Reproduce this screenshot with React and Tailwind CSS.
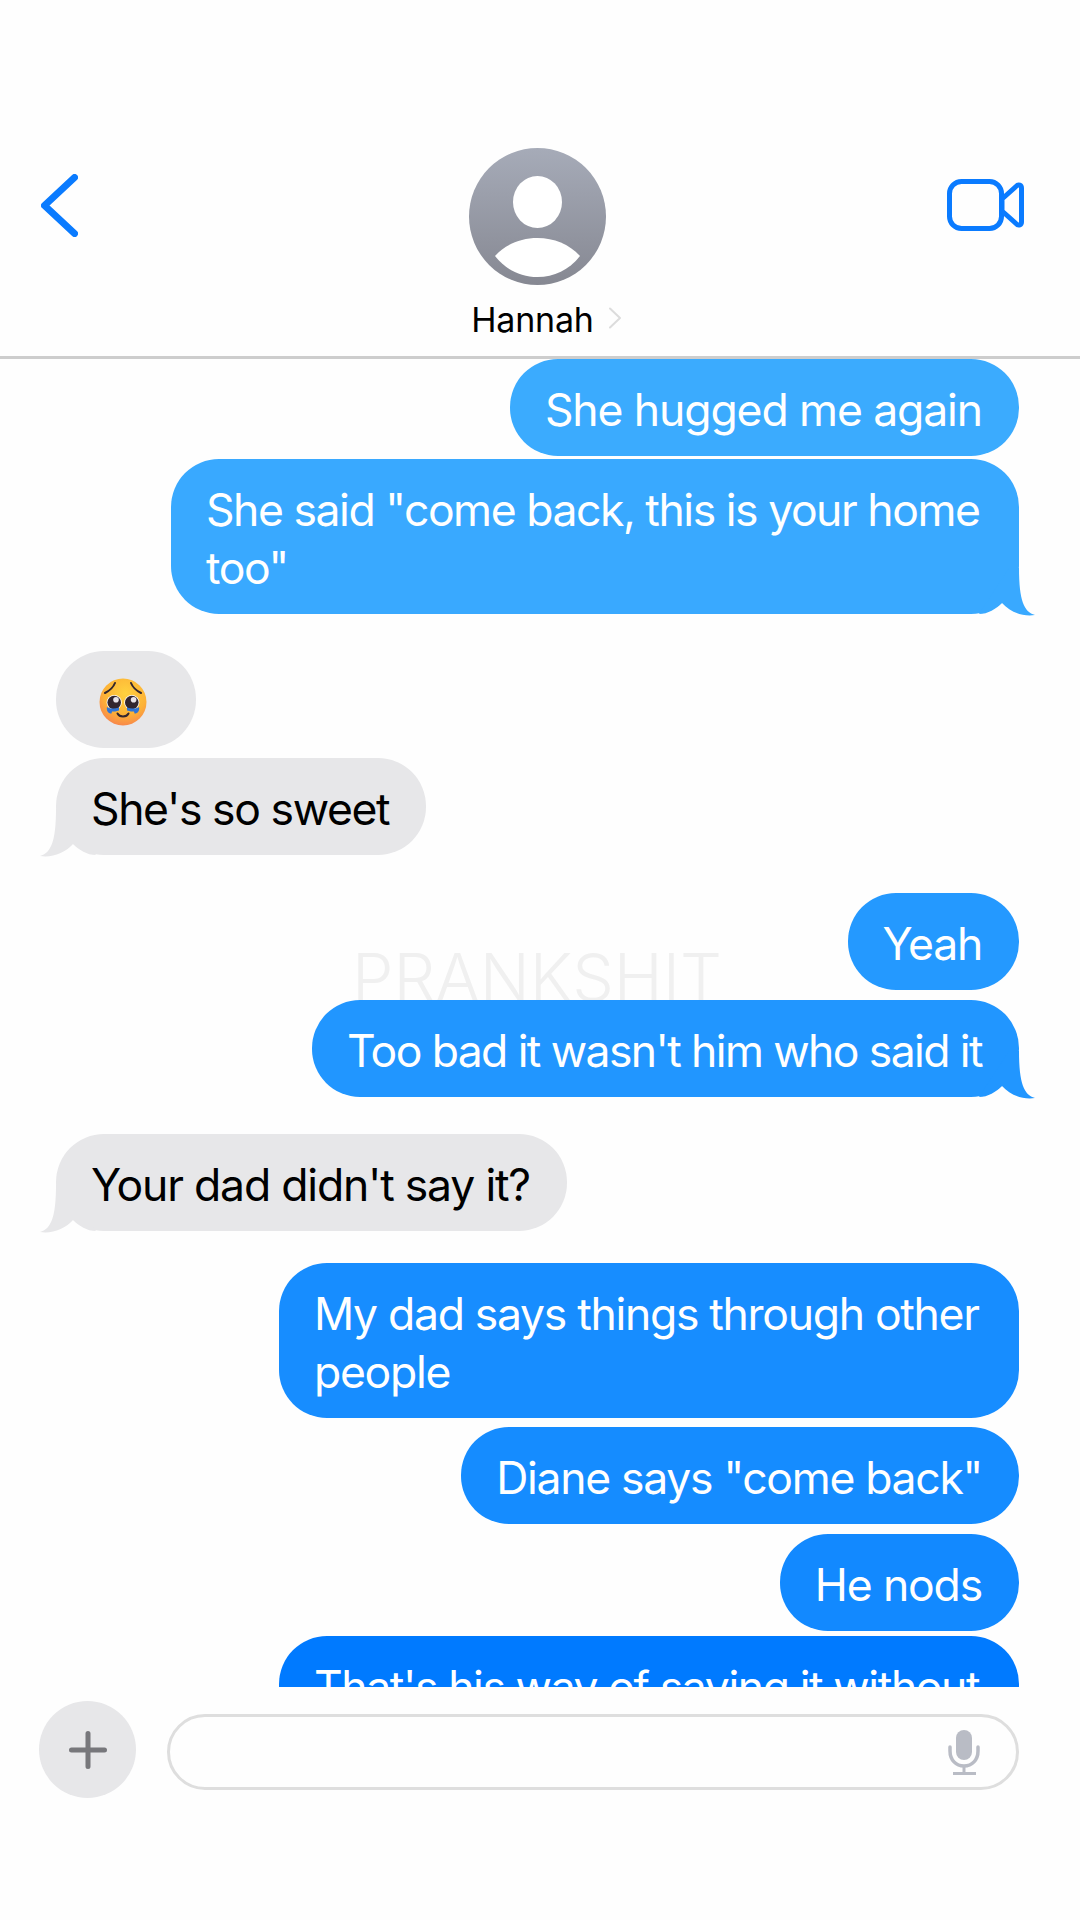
import React from 'react'

const Tail = ({ left, fill }) => (
  <svg
    className={`absolute bottom-[-2px] ${left ? '-left-[16px] -scale-x-100' : '-right-[16px]'}`}
    width="56"
    height="60"
    viewBox="0 0 56 60"
  >
    <path d="M0 58 C9 58 17 53 23 47 C31 56 44 61 56 59 C45 56 40 44 40 12 L30 12 Z" fill={fill} />
  </svg>
)

const Bubble = ({ left, color, tail, gap, track, children }) => {
  const side = left ? 'self-start ml-[56px] bg-[#e7e7e9] text-black' : 'self-end mr-[61px] text-white'
  return (
    <div className={`relative shrink-0 rounded-[48px] pl-[35px] pr-[37px] py-[19.5px] text-[44.5px] leading-[58px] ${track} ${side} ${color || ''} ${gap}`}>
      {tail && <Tail left={left} fill={tail} />}
      <span className="relative top-[2px]">{children}</span>
    </div>
  )
}

const PleadingEmoji = () => (
  <svg width="48" height="48" viewBox="0 0 48 48" className="block">
    <defs>
      <radialGradient id="face" cx="0.55" cy="0.32" r="0.75">
        <stop offset="0" stopColor="#ffd23f" />
        <stop offset="0.6" stopColor="#fdb236" />
        <stop offset="0.9" stopColor="#f88a4a" />
        <stop offset="1" stopColor="#f2708a" />
      </radialGradient>
    </defs>
    <circle cx="24" cy="24" r="23.500" fill="url(#face)" />
    <path d="M6 15 C10 13 14 10 16 5" stroke="#33262f" strokeWidth="2" fill="none" strokeLinecap="round" />
    <path d="M32 5 C34 10 38 13 42 15" stroke="#33262f" strokeWidth="2" fill="none" strokeLinecap="round" />
    <circle cx="15.200" cy="24.500" r="7.600" fill="#fff" />
    <circle cx="32.800" cy="24.500" r="7.600" fill="#fff" />
    <circle cx="15.200" cy="24.500" r="6.800" fill="#33262f" />
    <circle cx="32.800" cy="24.500" r="6.800" fill="#33262f" />
    <circle cx="17" cy="21.800" r="2.800" fill="#e8e4ea" />
    <circle cx="34.600" cy="21.800" r="2.800" fill="#e8e4ea" />
    <path d="M8 29 C11 31 16 31 20 29.500 L20 32.500 C17 33.500 15 33.500 13 33.500 L12.500 35.500 C10 36 7 33 8 29 Z" fill="#2f74d6" />
    <path d="M40 29 C37 31 32 31 28 29.500 L28 32.500 C31 33.500 33 33.500 35 33.500 L35.500 35.500 C38 36 41 33 40 29 Z" fill="#2f74d6" />
    <path d="M18.500 35.500 C20.500 39.500 27.500 39.500 29.500 35.500" stroke="#33262f" strokeWidth="2" fill="none" strokeLinecap="round" />
  </svg>
)

const App = () => {
  return (
    <div className="flex h-[1920px] w-[1080px] flex-col overflow-hidden bg-[#fefefe] font-['Inter',sans-serif]">
      <header className="grid h-[359px] shrink-0 grid-cols-[1fr_auto_1fr] items-start border-b-[3px] border-[#cdcdcd] pl-[41px] pr-[46px] pt-[148px]">
        <svg width="37" height="63" viewBox="0 0 37 63" className="mt-[26px]">
          <path d="M33.500 3.500 L3.500 31.500 L33.500 59.500" stroke="#0a7bff" strokeWidth="7" fill="none" strokeLinecap="round" strokeLinejoin="round" />
        </svg>
        <div className="flex flex-col items-center">
          <svg width="137" height="137" viewBox="0 0 137 137">
            <defs>
              <linearGradient id="avatar" x1="0" y1="0" x2="0" y2="1">
                <stop offset="0" stopColor="#a6abb8" />
                <stop offset="1" stopColor="#868892" />
              </linearGradient>
            </defs>
            <circle cx="68.500" cy="68.500" r="68.500" fill="url(#avatar)" />
            <ellipse cx="68.500" cy="54" rx="24.500" ry="26" fill="#fff" />
            <path d="M26 108 C37 96 52 90 68.500 90 C85 90 100 96 111 108 C100 122 85 129 68.500 129 C52 129 37 122 26 108 Z" fill="#fff" />
          </svg>
          <div className="relative mr-[10px] mt-[13px] text-[34px] leading-[44px] tracking-[-0.2px] text-black">
            Hannah
            <svg width="14" height="22" viewBox="0 0 14 22" className="absolute -right-[28px] top-[9px]">
              <path d="M2 1.500 L12 11 L2 20.500" stroke="#dcdcdc" strokeWidth="2" fill="none" strokeLinecap="round" strokeLinejoin="round" />
            </svg>
          </div>
        </div>
        <svg width="77" height="52" viewBox="0 0 77 52" className="mr-[10px] mt-[31px] justify-self-end">
          <rect x="2.500" y="2.500" width="52" height="47" rx="12" stroke="#0a7bff" strokeWidth="5" fill="none" />
          <path d="M55 20 L69.500 7 C71.500 5 74.500 6 74.500 9 L74.500 43 C74.500 46 71.500 47 69.500 45 L55 32 Z" stroke="#0a7bff" strokeWidth="5" fill="none" strokeLinejoin="round" />
        </svg>
      </header>

      <main className="relative flex h-[1328px] shrink-0 flex-col overflow-hidden">
        <div className="absolute left-[352px] top-[578px] text-[66px] font-light leading-[80px] text-[#f0f0f0]">PRANKSHIT</div>
        <Bubble color="bg-[#3babfe]" track="tracking-[-1.1px]" gap="mt-0">She hugged me again</Bubble>
        <Bubble color="bg-[#39a9ff] w-[848px]" track="tracking-[-1.45px]" tail="#39a9ff" gap="mt-[3px]">She said "come back, this is your home too"</Bubble>
        <Bubble left track="tracking-[-1.5px]" gap="mt-[37px]">
          <div className="flex h-[58px] w-[68px] items-center pl-[8px]"><PleadingEmoji /></div>
        </Bubble>
        <Bubble left track="tracking-[-1.4px]" tail="#e7e7e9" gap="mt-[10px]">She's so sweet</Bubble>
        <Bubble color="bg-[#2499ff]" track="tracking-[-1.25px]" gap="mt-[38px]">Yeah</Bubble>
        <Bubble color="bg-[#2196ff]" track="tracking-[-1.6px]" tail="#2196ff" gap="mt-[10px]">Too bad it wasn't him who said it</Bubble>
        <Bubble left track="tracking-[-1.2px]" tail="#e7e7e9" gap="mt-[37px]">Your dad didn't say it?</Bubble>
        <Bubble color="bg-[#178dff] w-[740px]" track="tracking-[-1.3px]" gap="mt-[32px]">My dad says things through other people</Bubble>
        <Bubble color="bg-[#158cff]" track="tracking-[-1.3px]" gap="mt-[9px]">Diane says "come back"</Bubble>
        <Bubble color="bg-[#1289ff]" track="tracking-[-1.15px]" gap="mt-[10px]">He nods</Bubble>
        <Bubble color="bg-[#007aff] w-[740px]" track="tracking-[-1.4px]" gap="mt-[5px]">That's his way of saying it without</Bubble>
      </main>

      <footer className="flex items-center gap-[31px] pl-[39px] pr-[61px] pt-[14px]">
        <div className="flex h-[97px] w-[97px] shrink-0 items-center justify-center rounded-full bg-[#e7e7e9]">
          <svg width="38" height="38" viewBox="0 0 38 38">
            <path d="M19 2.500 V35.500 M2.500 19 H35.500" stroke="#77777b" strokeWidth="5" strokeLinecap="round" />
          </svg>
        </div>
        <div className="mt-[5px] flex h-[76px] flex-1 items-center justify-end rounded-[38px] border-[3px] border-[#dedede] pr-[36px]">
          <svg width="32" height="45" viewBox="0 0 32 45">
            <rect x="8" y="0" width="16" height="30" rx="8" fill="#b9bcc5" />
            <path d="M2 17 V21 C2 30 8 36 16 36 C24 36 30 30 30 21 V17" stroke="#b9bcc5" strokeWidth="3.500" fill="none" strokeLinecap="round" />
            <path d="M16 36 V43 M5 43.500 H28" stroke="#b9bcc5" strokeWidth="3" />
          </svg>
        </div>
      </footer>
    </div>
  )
}

export default App
